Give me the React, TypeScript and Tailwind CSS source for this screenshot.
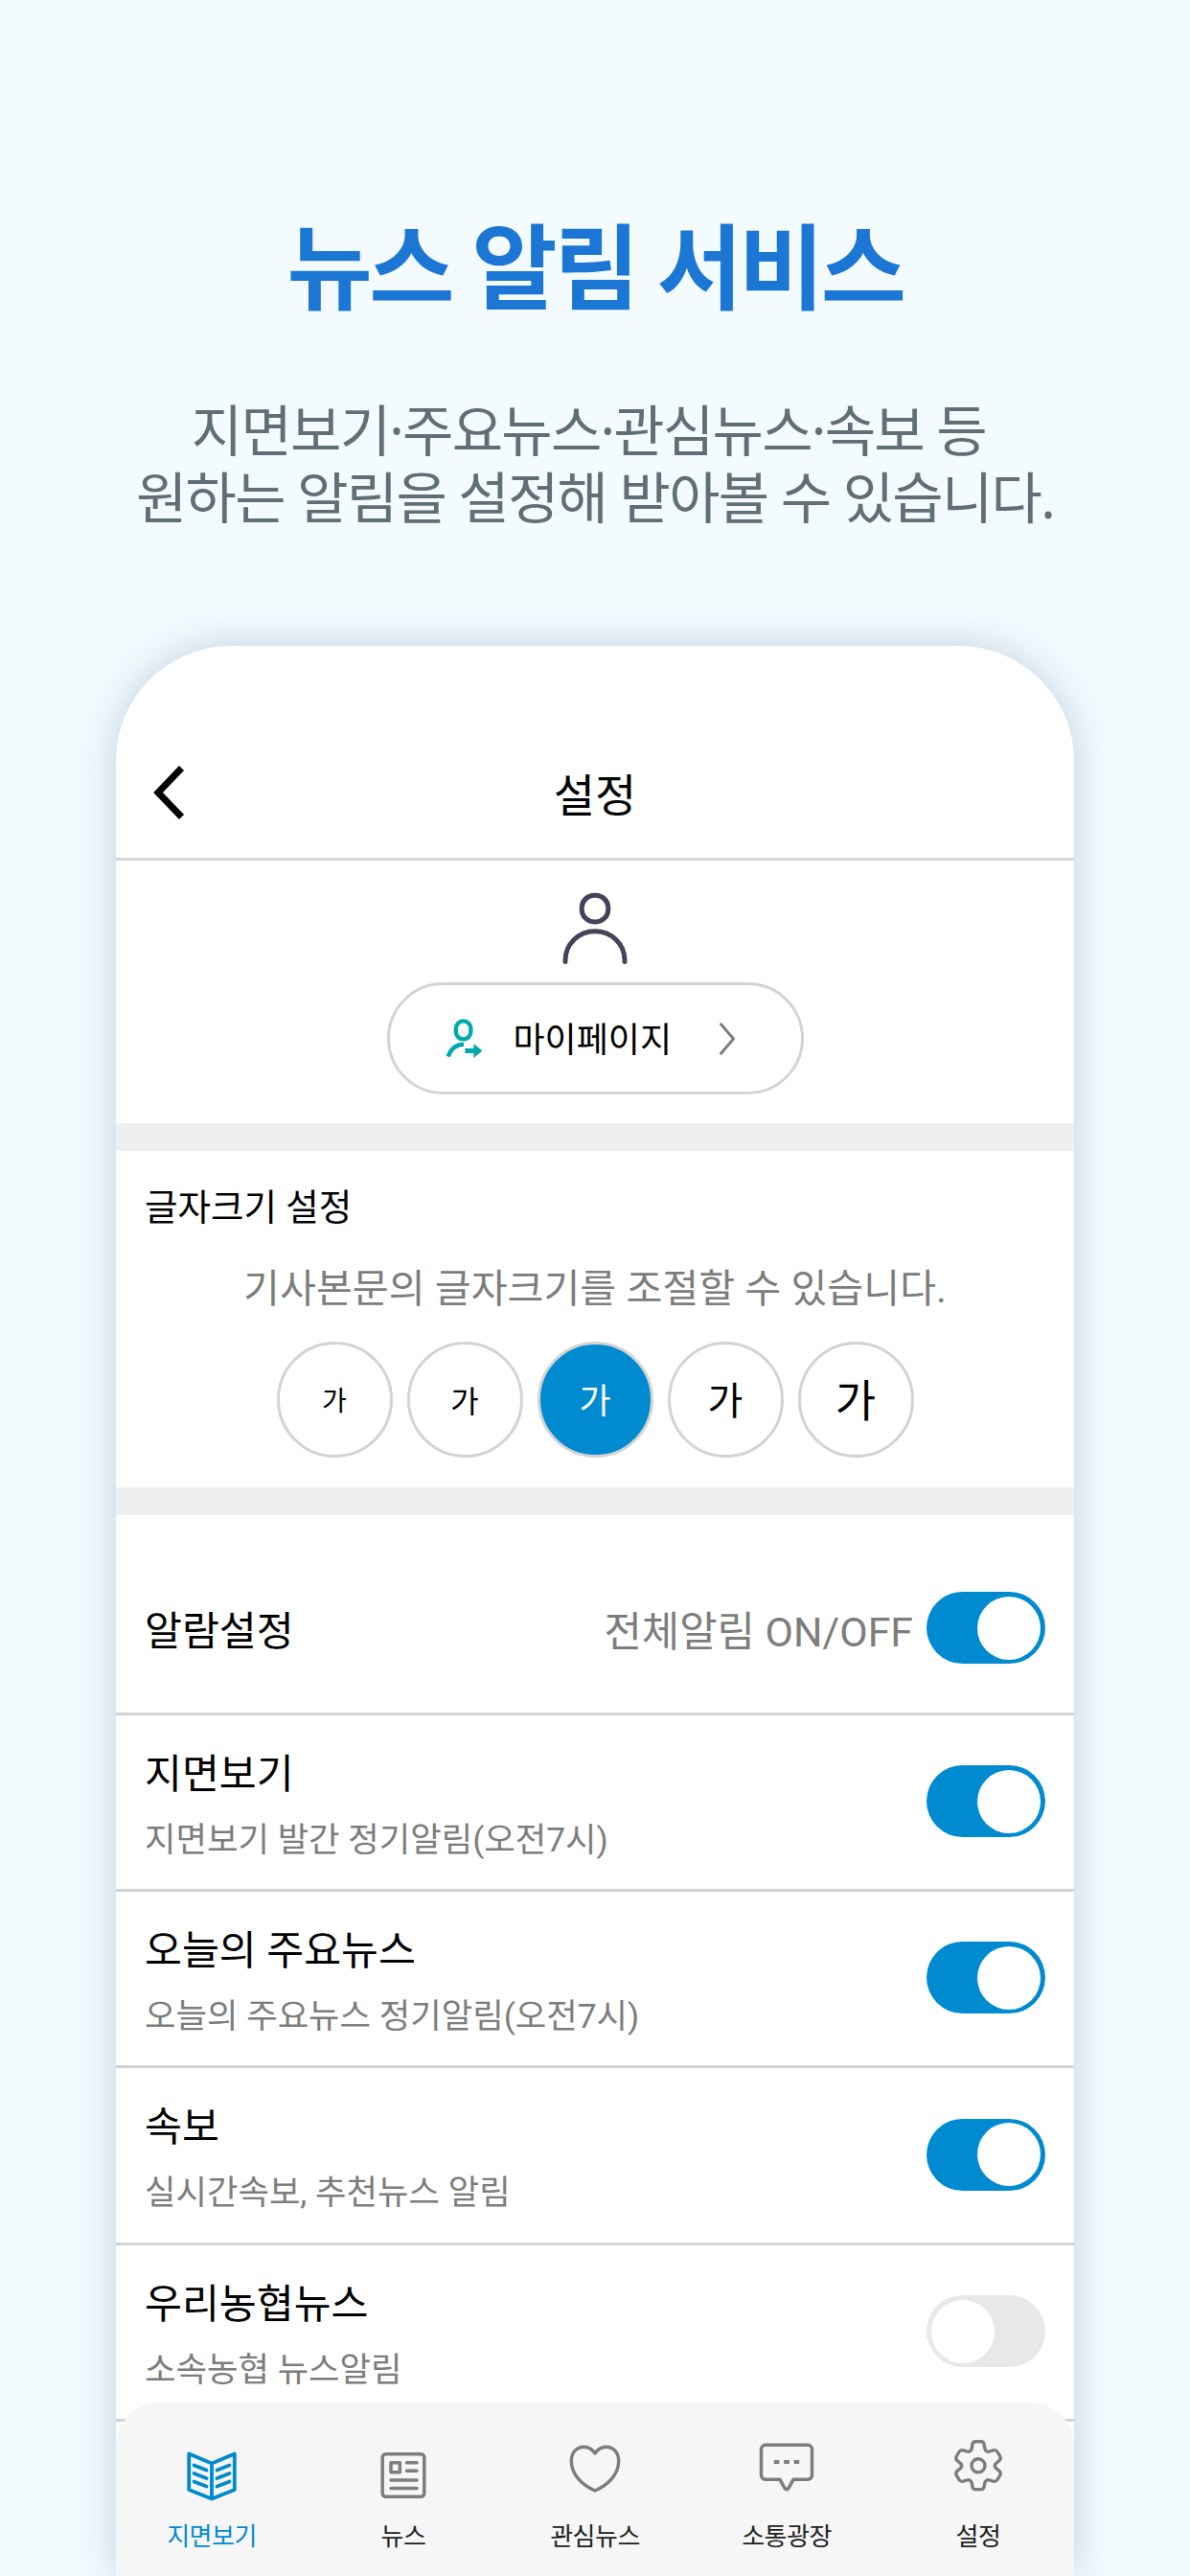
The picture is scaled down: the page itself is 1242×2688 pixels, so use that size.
import { useState } from 'react'

const SIZES = [
  'text-[28px]',
  'text-[32px]',
  'text-[36px]',
  'text-[40px]',
  'text-[46px]',
]

const ALARMS = [
  { k: 'paper' as const, label: '지면보기', desc: '지면보기 발간 정기알림(오전7시)', h: 'h-[184px]' },
  { k: 'today' as const, label: '오늘의 주요뉴스', desc: '오늘의 주요뉴스 정기알림(오전7시)', h: 'h-[184px]' },
  { k: 'breaking' as const, label: '속보', desc: '실시간속보, 추천뉴스 알림', h: 'h-[185px]' },
  { k: 'nonghyup' as const, label: '우리농협뉴스', desc: '소속농협 뉴스알림', h: 'h-[184px]' },
]

function Toggle({ on, onClick }: { on: boolean; onClick: () => void }) {
  return (
    <button onClick={onClick}
      className={`flex h-[75px] w-[124px] shrink-0 items-center rounded-full px-[5px] ${on ? 'justify-end bg-[#008bd0]' : 'justify-start bg-[#e8e8e8]'}`}>
      <span className="h-[66px] w-[66px] rounded-full bg-white" />
    </button>
  )
}

function PersonIcon() {
  return (
    <svg width="70" height="78" viewBox="0 0 70 78" fill="none" stroke="#43435a" strokeWidth="5" strokeLinecap="round">
      <rect x="21.2" y="4.3" width="27.6" height="27.6" rx="13" />
      <path d="M4 73.5v-1.5C4 55 18 41.8 35 41.8S66 55 66 72v1.5" />
    </svg>
  )
}

function MyPageIcon() {
  return (
    <svg width="40" height="42" viewBox="0 0 40 42" fill="none" stroke="#00aaac" strokeWidth="4.4">
      <rect x="10.8" y="2.4" width="15.6" height="19" rx="7.8" />
      <path d="M2.6 39.4C5.5 31.5 11.5 26.9 19 26.7" />
      <path d="M20.4 31h9v-5l9 7.5-9 7.5v-5h-9z" fill="#00aaac" stroke="none" />
    </svg>
  )
}

function BookIcon() {
  return (
    <svg width="54" height="54" viewBox="0 0 54 54" fill="none" stroke="#008bd0" strokeWidth="3.8" strokeLinecap="round" strokeLinejoin="round">
      <path d="M3.2 3.5L27 13.5L50.8 3.5V41L27 50.5L3.2 41ZM27 13.5V50" />
      <path d="M8.5 15.5l13 5M8.5 24l13 5M8.5 32.5l13 5M45.5 15.5l-13 5M45.5 24l-13 5M45.5 32.5l-13 5" />
    </svg>
  )
}

function NewsIcon() {
  return (
    <svg width="54" height="54" viewBox="0 0 54 54" fill="none" stroke="#7d7d7d" strokeWidth="3.5" strokeLinecap="round" strokeLinejoin="round">
      <rect x="5.2" y="3.7" width="43.6" height="44.6" rx="3.5" />
      <rect x="14" y="12.7" width="9.3" height="10" />
      <path d="M30.5 12.7h10.5M30.5 21.2h10.5M14 31h27M14 39.5h27" />
    </svg>
  )
}

function HeartIcon() {
  return (
    <svg width="56" height="54" viewBox="0 0 56 54" fill="none" stroke="#7d7d7d" strokeWidth="3.4" strokeLinejoin="round">
      <path d="M28 10C25 5.5 21 3.2 16.5 3.2C8.5 3.2 3.3 9.5 3.3 18C3.3 31.5 13.5 42.5 28 49C42.5 42.5 52.7 31.5 52.7 18C52.7 9.5 47.5 3.2 39.5 3.2C35 3.2 31 5.5 28 10Z" />
    </svg>
  )
}

function ChatIcon() {
  return (
    <svg width="60" height="54" viewBox="0 0 60 54" fill="none" stroke="#7d7d7d" strokeWidth="3.5" strokeLinejoin="round">
      <path d="M8 3.3H52A4.5 4.5 0 0 1 56.5 7.8V34.8A4.5 4.5 0 0 1 52 39.3H37L32 48.3Q30 51.3 28 48.3L23 39.3H8A4.5 4.5 0 0 1 3.500 34.8V7.8A4.5 4.5 0 0 1 8 3.3Z" />
      <path d="M16.8 21.1h5.600M27.2 21.1h5.600M37.6 21.1h5.600" strokeWidth="4" />
    </svg>
  )
}

function GearIcon() {
  return (
    <svg width="54" height="56" viewBox="0 0 54 56" fill="none" stroke="#7d7d7d" strokeWidth="3.4" strokeLinejoin="round">
      <path d="M24 2.7H30Q32.5 2.7 33 5.5L33.8 10Q35 14.3 39 13L42.5 11.8Q45.5 11 47 13.5L49.7 18Q51 20.5 49 22.5L45.5 25.5Q43 28 45.5 30.5L49 33.5Q51 35.5 49.7 38L47 42.5Q45.5 45 42.5 44.2L39 43Q35 41.7 33.8 46L33 50Q32.5 52.6 30 52.6H24Q21.5 52.6 21 50L20.2 46Q19 41.7 15 43L11.5 44.2Q8.5 45 7 42.5L4.3 38Q3 35.5 5 33.5L8.5 30.5Q11 28 8.5 25.5L5 22.5Q3 20.5 4.3 18L7 13.5Q8.5 11 11.5 11.8L15 13Q19 14.3 20.2 10L21 5.5Q21.5 2.7 24 2.7Z" />
      <circle cx="27" cy="27.8" r="7" />
    </svg>
  )
}

const TABS = [
  { label: '지면보기', icon: <BookIcon />, pad: 'pt-[12px]' },
  { label: '뉴스', icon: <NewsIcon />, pad: 'pt-[12px]' },
  { label: '관심뉴스', icon: <HeartIcon />, pad: 'pt-[5px]' },
  { label: '소통광장', icon: <ChatIcon />, pad: 'pt-[3px]' },
  { label: '설정', icon: <GearIcon />, pad: 'pt-0' },
]

export default function App() {
  const [size, setSize] = useState(2)
  const [alarms, setAlarms] = useState({ all: true, paper: true, today: true, breaking: true, nonghyup: false })

  const toggle = (k: keyof typeof alarms) => setAlarms(a => ({ ...a, [k]: !a[k] }))

  return (
    <div className="flex h-[2688px] w-[1242px] flex-col items-center overflow-hidden bg-[#f4fbff] font-['Noto_Sans','Noto_Sans_CJK_KR',sans-serif] text-black">
      {/* Headline */}
      <h1 className="mt-[207px] text-[97px] leading-[140px] font-bold tracking-[-0.037em] text-[#1b76d4]">뉴스 알림 서비스</h1>
      <p className="mt-[67px] h-[260px] text-center text-[58px] leading-[70px] tracking-[-0.03em] whitespace-pre text-[#606f76]">
        {'지면보기·주요뉴스·관심뉴스·속보 등 \n원하는 알림을 설정해 받아볼 수 있습니다.'}
      </p>

      {/* Phone */}
      <main className="relative h-[2014px] w-[1000px] shrink-0 overflow-hidden rounded-t-[120px] bg-white font-[Roboto,'Noto_Sans_CJK_KR',sans-serif] shadow-[0_0_44px_rgba(30,73,123,0.24)]">
        <header className="grid h-[224px] grid-cols-3 items-center border-b-[3px] border-[#d6d6d6] px-[39px] pt-[84px]">
          <svg width="33" height="56" viewBox="0 0 33 56" fill="none" stroke="black" strokeWidth="7">
            <path d="M29.5 2.5L5 28L29.5 53.5" />
          </svg>
          <h2 className="pt-[9px] text-center text-[47px] leading-[60px]">설정</h2>
        </header>

        {/* My page */}
        <section className="flex h-[274px] flex-col items-center pt-[32px]">
          <PersonIcon />
          <button className="mt-[17px] flex h-[117px] w-[435px] items-center rounded-full border-[3px] border-[#d3d3d3] pl-[58px]">
            <MyPageIcon />
            <span className="ml-[31px] w-[214px] pt-[5px] text-left text-[36px] leading-[50px]">마이페이지</span>
            <svg width="18" height="36" viewBox="0 0 18 36" fill="none" stroke="#7d7d7d" strokeWidth="3" strokeLinecap="round" strokeLinejoin="round">
              <path d="M2.5 2.8L15.5 18L2.5 33.2" />
            </svg>
          </button>
        </section>
        <div className="h-[29px] bg-[#efefef]" />

        {/* Font size */}
        <section className="h-[351px] pt-[34px]">
          <h3 className="pl-[30px] text-[37.5px] leading-[50px]">글자크기 설정</h3>
          <p className="mt-[35px] text-center text-[41.2px] leading-[50px] text-[#7d7d7d]">기사본문의 글자크기를 조절할 수 있습니다.</p>
          <div className="mt-[30px] flex justify-center gap-[15px]">
            {SIZES.map((s, i) => (
              <button key={s} onClick={() => setSize(i)}
                className={`flex h-[121px] w-[121px] items-center justify-center rounded-full border-[3px] border-[#d3d3d3] pt-[4px] ${s} ${size === i ? 'bg-[#008bd0] text-white' : ''}`}>
                가
              </button>
            ))}
          </div>
        </section>
        <div className="h-[29px] bg-[#efefef]" />

        {/* Alarms */}
        <section>
          <div className="flex h-[209px] items-center border-b-[3px] border-[#d3d3d3] px-[30px] pt-[29px]">
            <h3 className="flex-1 pt-[8px] text-[42.3px] leading-[50px]">알람설정</h3>
            <span className="mr-[14px] pt-[8px] text-[42.8px] leading-[50px] text-[#7d7d7d]">전체알림 ON/OFF</span>
            <Toggle on={alarms.all} onClick={() => toggle('all')} />
          </div>
          {ALARMS.map(({ k, label, desc, h }) => (
            <div key={k} className={`flex ${h} items-center border-b-[3px] border-[#d3d3d3] px-[30px] pb-[2px]`}>
              <div className="flex-1 pt-[7px]">
                <p className="text-[42.3px] leading-[60px]">{label}</p>
                <p className="mt-[13px] text-[35.3px] leading-[50px] text-[#7d7d7d]">{desc}</p>
              </div>
              <Toggle on={alarms[k]} onClick={() => toggle(k)} />
            </div>
          ))}
        </section>

        {/* Bottom tabs, over the scrolled list */}
        <nav className="absolute inset-x-0 bottom-0 grid h-[181px] grid-cols-5 rounded-t-[46px] bg-[#f6f6f6] pt-[38px]">
          {TABS.map(({ label, icon, pad }, i) => (
            <button key={label} className={`flex flex-col items-center ${i === 0 ? 'text-[#008bd0]' : 'text-[#222]'}`}>
              <span className={`flex h-[82px] items-start ${pad}`}>{icon}</span>
              <span className="text-[26px] leading-[40px] tracking-[-0.02em]">{label}</span>
            </button>
          ))}
        </nav>
      </main>
    </div>
  )
}
